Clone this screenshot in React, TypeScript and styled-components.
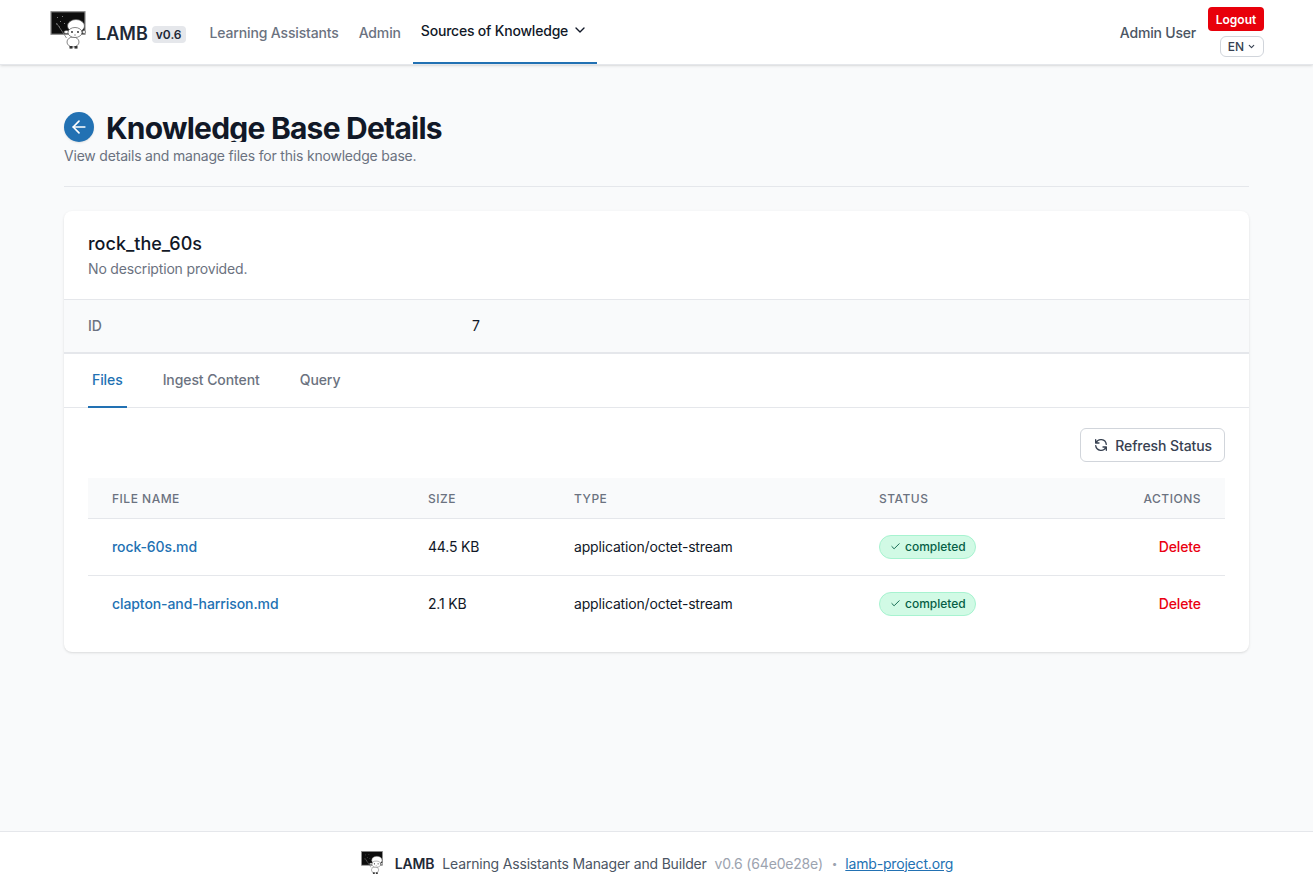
import React from 'react';
import styled, { createGlobalStyle } from 'styled-components';
import { ArrowLeft, Check, ChevronDown } from 'lucide-react';

const GlobalStyle = createGlobalStyle`
  html, body { margin: 0; padding: 0; }
  body {
    background: #f9fafb;
    font-family: Inter, "Liberation Sans", sans-serif;
    color: #111827;
  }
  * { box-sizing: border-box; }
`;

const files = [
  { name: 'rock-60s.md', size: '44.5 KB', type: 'application/octet-stream', status: 'completed' },
  { name: 'clapton-and-harrison.md', size: '2.1 KB', type: 'application/octet-stream', status: 'completed' },
];

const Sheep: React.FC<{ size: number }> = ({ size }) => (
  <svg width={size} height={(size * 38) / 36} viewBox="0 0 36 38" aria-hidden="true">
    <rect x="1" y="0.75" width="34" height="22.5" fill="#0d0d0d" stroke="#8a8a8a" strokeWidth="1.2" />
    <path d="M7 6l.8.8M10 10l.8.8M6 13h.8M12 5l.8.8M14 12l.8.8M9 16h.8" stroke="#d8d8d8" strokeWidth="0.7" />
    <path d="M6.5 12L16.5 27" stroke="#777" strokeWidth="0.8" />
    <ellipse cx="23" cy="31" rx="6" ry="5" fill="#fff" stroke="#555" strokeWidth="0.7" />
    <ellipse cx="26" cy="15" rx="8.5" ry="6.5" fill="#fff" stroke="#555" strokeWidth="0.7" />
    <ellipse cx="16.5" cy="21" rx="2.6" ry="1.5" fill="#fff" stroke="#555" strokeWidth="0.6" />
    <ellipse cx="34" cy="21" rx="1.8" ry="1.4" fill="#fff" stroke="#555" strokeWidth="0.6" />
    <ellipse cx="25" cy="21.5" rx="7" ry="5" fill="#fff" stroke="#555" strokeWidth="0.7" />
    <circle cx="22" cy="21" r="0.9" fill="#222" />
    <circle cx="28" cy="21" r="0.9" fill="#222" />
    <path d="M24 24h2" stroke="#555" strokeWidth="0.6" />
    <rect x="19.5" y="35" width="3" height="2.6" fill="#333" />
    <rect x="24.5" y="35" width="3" height="2.6" fill="#333" />
  </svg>
);

const RefreshIcon: React.FC = () => (
  <svg width="16" height="16" viewBox="0 0 24 24" fill="none" stroke="currentColor" strokeWidth="2" strokeLinecap="round" strokeLinejoin="round" aria-hidden="true">
    <path d="M4 4v5h.582m15.356 2A8.001 8.001 0 004.582 9m0 0H9m11 11v-5h-.581m0 0a8.003 8.003 0 01-15.357-2m15.357 2H15" />
  </svg>
);

const App: React.FC = () => {
  return (
    <Page>
      <GlobalStyle />
      <NavBar>
        <Brand>
          <Sheep size={36} />
          <BrandName>LAMB</BrandName>
          <VersionTag>v0.6</VersionTag>
        </Brand>
        <NavLinks>
          <NavLink>Learning Assistants</NavLink>
          <NavLink>Admin</NavLink>
          <ActiveNavLink>
            Sources of Knowledge
            <ChevronDown size={16} strokeWidth={2} />
          </ActiveNavLink>
        </NavLinks>
        <NavRight>
          <UserName>Admin User</UserName>
          <NavActions>
            <LogoutButton>Logout</LogoutButton>
            <LangButton>
              EN
              <ChevronDown size={9} strokeWidth={3} />
            </LangButton>
          </NavActions>
        </NavRight>
      </NavBar>

      <Main>
        <Header>
          <TitleRow>
            <BackButton>
              <ArrowLeft size={20} strokeWidth={2} />
            </BackButton>
            <Title>Knowledge Base Details</Title>
          </TitleRow>
          <Subtitle>View details and manage files for this knowledge base.</Subtitle>
        </Header>

        <Card>
          <CardHead>
            <KbName>rock_the_60s</KbName>
            <KbDescription>No description provided.</KbDescription>
          </CardHead>
          <MetaRow>
            <MetaLabel>ID</MetaLabel>
            <MetaValue>7</MetaValue>
          </MetaRow>
          <Tabs>
            <Tab $active>Files</Tab>
            <Tab>Ingest Content</Tab>
            <Tab>Query</Tab>
          </Tabs>
          <TabBody>
            <Toolbar>
              <RefreshButton>
                <RefreshIcon />
                Refresh Status
              </RefreshButton>
            </Toolbar>
            <Table>
              <thead>
                <tr>
                  <Th $width={316}>File Name</Th>
                  <Th $width={146}>Size</Th>
                  <Th $width={305}>Type</Th>
                  <Th>Status</Th>
                  <Th $right>Actions</Th>
                </tr>
              </thead>
              <tbody>
                {files.map((file) => (
                  <tr key={file.name}>
                    <Td>
                      <FileLink href="#">{file.name}</FileLink>
                    </Td>
                    <Td>{file.size}</Td>
                    <Td>{file.type}</Td>
                    <Td>
                      <StatusBadge>
                        <Check size={11} strokeWidth={2} />
                        {file.status}
                      </StatusBadge>
                    </Td>
                    <Td $right>
                      <DeleteLink>Delete</DeleteLink>
                    </Td>
                  </tr>
                ))}
              </tbody>
            </Table>
          </TabBody>
        </Card>
      </Main>

      <Footer>
        <Sheep size={22} />
        <FooterBrand>LAMB</FooterBrand>
        <FooterText>Learning Assistants Manager and Builder</FooterText>
        <FooterMuted>v0.6 (64e0e28e)</FooterMuted>
        <FooterDot>•</FooterDot>
        <FooterLink href="#">lamb-project.org</FooterLink>
      </Footer>
    </Page>
  );
};

const Page = styled.div`
  min-height: 896px;
  display: flex;
  flex-direction: column;
`;

const NavBar = styled.nav`
  height: 65px;
  background: #fff;
  display: flex;
  align-items: center;
  padding: 0 49px 0 50px;
  box-shadow: 0 1px 3px rgba(0, 0, 0, 0.1), 0 1px 2px -1px rgba(0, 0, 0, 0.1);
  border-bottom: 1px solid #e5e7eb;
`;

const Brand = styled.div`
  display: flex;
  align-items: center;
  margin-bottom: 4px;
`;

const BrandName = styled.span`
  margin-left: 10px;
  margin-top: 7px;
  font-size: 18px;
  font-weight: 600;
  color: #1f2937;
  line-height: 28px;
`;

const VersionTag = styled.span`
  margin-left: 4px;
  margin-top: 9px;
  padding: 0 4px;
  background: #e5e7eb;
  border-radius: 4px;
  font-size: 12px;
  font-weight: 600;
  line-height: 17px;
  color: #1f2937;
`;

const NavLinks = styled.div`
  display: flex;
  height: 100%;
  margin-left: 24px;
`;

const NavLink = styled.a`
  display: flex;
  align-items: center;
  font-size: 14px;
  font-weight: 500;
  letter-spacing: -0.15px;
  color: #6b7280;
  margin-right: 20px;
`;

const ActiveNavLink = styled.a`
  display: flex;
  align-items: center;
  gap: 4px;
  height: 100%;
  margin-left: -8px;
  padding: 0 9px 2px 8px;
  font-size: 14px;
  font-weight: 500;
  letter-spacing: -0.2px;
  color: #111827;
  border-bottom: 2px solid #2271b3;
`;

const NavRight = styled.div`
  margin-left: auto;
  display: flex;
  align-items: center;
  gap: 12px;
`;

const UserName = styled.span`
  font-size: 14px;
  font-weight: 500;
  letter-spacing: -0.2px;
  color: #4b5563;
`;

const NavActions = styled.div`
  display: flex;
  flex-direction: column;
  align-items: flex-end;
  gap: 5px;
`;

const LogoutButton = styled.button`
  height: 24px;
  width: 56px;
  padding: 0;
  border: none;
  border-radius: 4px;
  background: #e8000b;
  color: #fff;
  font: 600 12px Inter, sans-serif;
`;

const LangButton = styled.button`
  height: 21px;
  width: 44px;
  padding: 0;
  display: flex;
  align-items: center;
  justify-content: center;
  gap: 3px;
  background: #fff;
  border: 1px solid #d1d5db;
  border-radius: 6px;
  color: #374151;
  font: 500 12px Inter, sans-serif;
`;

const Main = styled.main`
  flex: 1;
  padding: 47px 64px 0;
`;

const Header = styled.header`
  padding-bottom: 20px;
  border-bottom: 1px solid #e5e7eb;
  margin-bottom: 24px;
`;

const TitleRow = styled.div`
  display: flex;
  align-items: center;
  gap: 12px;
`;

const BackButton = styled.button`
  width: 30px;
  height: 30px;
  padding: 0;
  border: none;
  border-radius: 50%;
  background: #2271b3;
  color: #fff;
  display: flex;
  align-items: center;
  justify-content: center;
  box-shadow: 0 1px 2px rgba(0, 0, 0, 0.1);
`;

const Title = styled.h1`
  margin: 0;
  height: 29px;
  overflow: hidden;
  font-size: 30px;
  font-weight: 700;
  line-height: 31px;
  letter-spacing: -0.77px;
  color: #111827;
`;

const Subtitle = styled.p`
  margin: 4px 0 0;
  font-size: 14px;
  line-height: 20px;
  letter-spacing: -0.2px;
  color: #6b7280;
`;

const Card = styled.section`
  background: #fff;
  border-radius: 8px;
  box-shadow: 0 1px 3px rgba(0, 0, 0, 0.1), 0 1px 2px -1px rgba(0, 0, 0, 0.1);
  overflow: hidden;
`;

const CardHead = styled.div`
  padding: 20px 24px;
  height: 88px;
`;

const KbName = styled.h2`
  margin: 0;
  font-size: 18px;
  font-weight: 500;
  line-height: 26px;
  color: #111827;
`;

const KbDescription = styled.p`
  margin: 2px 0 0;
  font-size: 14px;
  line-height: 20px;
  letter-spacing: -0.17px;
  color: #6b7280;
`;

const MetaRow = styled.div`
  height: 55px;
  display: grid;
  grid-template-columns: 384px 1fr;
  align-items: center;
  padding: 0 24px 1px;
  background: #f9fafb;
  border-top: 1px solid #e5e7eb;
  border-bottom: 2px solid #e5e7eb;
  font-size: 14px;
`;

const MetaLabel = styled.span`
  font-weight: 500;
  color: #6b7280;
`;

const MetaValue = styled.span`
  color: #111827;
`;

const Tabs = styled.div`
  display: flex;
  gap: 32px;
  padding: 0 24px;
  height: 54px;
  border-bottom: 1px solid #e5e7eb;
`;

const Tab = styled.a<{ $active?: boolean }>`
  display: flex;
  align-items: center;
  padding: 0 4px 2px;
  font-size: 14px;
  font-weight: 500;
  letter-spacing: -0.09px;
  color: ${(p) => (p.$active ? '#2271b3' : '#6b7280')};
  border-bottom: 2px solid ${(p) => (p.$active ? '#2271b3' : 'transparent')};
  margin-bottom: -1px;
`;

const TabBody = styled.div`
  padding: 20px 24px 20px;
`;

const Toolbar = styled.div`
  display: flex;
  justify-content: flex-end;
  margin-bottom: 16px;
`;

const RefreshButton = styled.button`
  display: flex;
  align-items: center;
  gap: 6px;
  height: 34px;
  padding: 0 12px;
  background: #fff;
  border: 1px solid #d1d5db;
  border-radius: 6px;
  color: #374151;
  font: 500 14px Inter, sans-serif;
  letter-spacing: -0.09px;
`;

const Table = styled.table`
  width: 100%;
  border-collapse: collapse;
  table-layout: fixed;
`;

const Th = styled.th<{ $width?: number; $right?: boolean }>`
  width: ${(p) => (p.$width ? `${p.$width}px` : 'auto')};
  height: 40px;
  padding: 1px 24px 0;
  background: #f9fafb;
  border-bottom: 1px solid #e5e7eb;
  text-align: ${(p) => (p.$right ? 'right' : 'left')};
  font-size: 12px;
  font-weight: 500;
  letter-spacing: 0.5px;
  text-transform: uppercase;
  color: #6b7280;
`;

const Td = styled.td<{ $right?: boolean }>`
  height: 57px;
  padding: 0 24px;
  border-bottom: 1px solid #e5e7eb;
  text-align: ${(p) => (p.$right ? 'right' : 'left')};
  font-size: 14px;
  letter-spacing: -0.17px;
  color: #111827;

  tr:last-child & {
    border-bottom: none;
  }
`;

const FileLink = styled.a`
  color: #2271b3;
  font-weight: 500;
  letter-spacing: -0.09px;
  text-decoration: none;
`;

const StatusBadge = styled.span`
  display: inline-flex;
  align-items: center;
  gap: 4px;
  height: 24px;
  padding: 0 9px 0 10px;
  background: #d1fae5;
  border: 1px solid #a7f3d0;
  border-radius: 12px;
  font-size: 12px;
  font-weight: 500;
  letter-spacing: 0;
  color: #065f46;
  vertical-align: middle;
`;

const DeleteLink = styled.a`
  color: #ea0011;
  font-weight: 500;
  letter-spacing: -0.1px;
`;

const Footer = styled.footer`
  height: 65px;
  padding: 0 0 2px 1px;
  display: flex;
  align-items: center;
  justify-content: center;
  background: #fff;
  border-top: 1px solid #e5e7eb;
  font-size: 14px;
  letter-spacing: -0.18px;
`;

const FooterBrand = styled.span`
  margin-left: 12px;
  font-weight: 600;
  color: #1f2937;
`;

const FooterText = styled.span`
  margin-left: 8px;
  color: #4b5563;
`;

const FooterMuted = styled.span`
  margin-left: 8px;
  color: #9ca3af;
`;

const FooterDot = styled.span`
  margin-left: 9px;
  font-size: 10px;
  color: #9ca3af;
`;

const FooterLink = styled.a`
  margin-left: 8px;
  color: #2271b3;
`;

export default App;
